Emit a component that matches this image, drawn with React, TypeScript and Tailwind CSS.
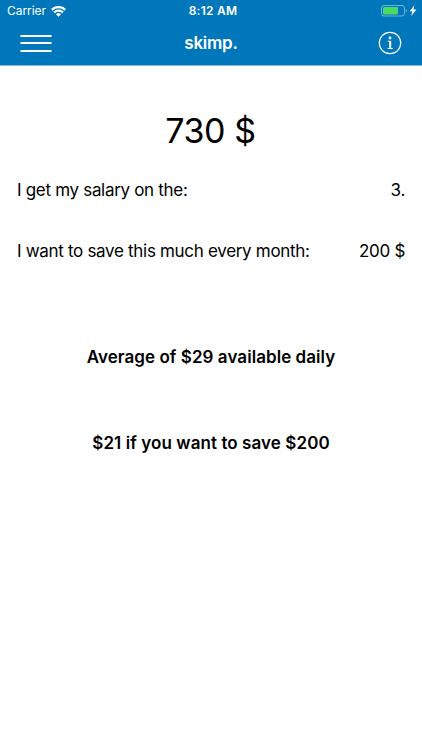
export default function App() {
  return (
    <div className="h-[750px] w-[422px] overflow-hidden bg-white font-['Inter',sans-serif] text-black">
      <header className="h-[66px] border-b border-[#80bbdd] bg-[#0077bb] text-white">
        <div className="grid h-[22px] grid-cols-3 items-center pl-[7px] pr-[5px] text-[12px]">
          <div className="flex items-center gap-[5px]">
            <span className="tracking-[-0.05px]">Carrier</span>
            <svg width="15" height="11" viewBox="0 0 15 11" fill="none" stroke="currentColor" strokeWidth="2.3">
              <path d="M.8 3.900a9.500 9.500 0 0 1 13.400 0M3.100 6.500a6.200 6.200 0 0 1 8.800 0" />
              <path d="M7.500 10.800 5 8.300a3.600 3.600 0 0 1 5 0z" fill="currentColor" stroke="none" />
            </svg>
          </div>
          <span className="pl-[2px] text-center font-semibold tracking-[0.25px]">8:12 AM</span>
          <svg className="justify-self-end" width="36" height="12" viewBox="0 0 36 12">
            <rect x=".5" y=".5" width="23" height="10.500" rx="2.500" fill="none" stroke="#70b4db" />
            <rect x="2" y="2" width="15" height="7.500" rx="1" fill="#4cd964" />
            <path d="M24.800 4v3.500c1.600-.7 1.600-2.800 0-3.500z" fill="#70b4db" />
            <path d="m33.300.3-4.600 5.900h2.700l-1.200 4.900 5.300-6.500h-3z" fill="white" />
          </svg>
        </div>
        <div className="grid h-[42px] grid-cols-3 items-center px-[20px]">
          <div className="flex w-[31px] translate-x-[0.5px] flex-col gap-[5.500px]">
            <i className="h-[2px] bg-white" /><i className="h-[2px] bg-white" /><i className="h-[2px] bg-white" />
          </div>
          <h1 className="pt-[2px] text-center text-[17px] font-semibold tracking-[-0.25px]">skimp.</h1>
          <svg className="justify-self-end" width="24" height="24" viewBox="0 0 24 24" fill="none" stroke="white">
            <circle cx="12" cy="12" r="10.700" strokeWidth="1.2" />
            <circle cx="12" cy="7" r="1.400" fill="white" stroke="none" />
            <path d="M12.200 10v7.500" strokeWidth="2" />
            <path d="M9.800 10.200h2.700M9.700 17.500h5" strokeWidth="1" />
          </svg>
        </div>
      </header>
      <main>
        <div className="pr-[1px] pt-[42px] text-center text-[34px] leading-[46px] tracking-[-0.4px]">730 $</div>
        <div className="mt-[24px] flex justify-between px-[17px] text-[17px] leading-[24px] tracking-[-0.31px]"><span>I get my salary on the:</span><span>3.</span></div>
        <div className="mt-[37px] flex justify-between px-[17px] text-[17px] leading-[24px] tracking-[-0.31px]"><span>I want to save this much every month:</span><span>200 $</span></div>
        <p className="mt-[82px] text-center text-[17px] font-semibold leading-[24px] tracking-[0.06px]">Average of $29 available daily</p>
        <p className="mt-[62px] text-center text-[17px] font-semibold leading-[24px] tracking-[0.08px]">$21 if you want to save $200</p>
      </main>
    </div>
  );
}
